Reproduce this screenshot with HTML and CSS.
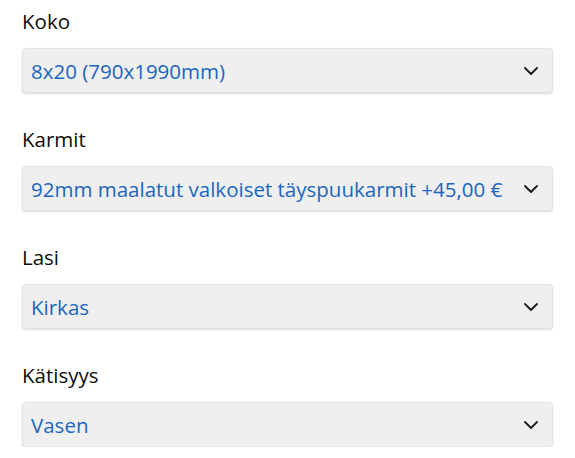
FILE: index.html
```html
<!DOCTYPE html>
<html lang="fi">
<head>
<meta charset="utf-8">
<link rel="stylesheet" href="styles.css">
</head>
<body>
<div class="form">
  <div class="field">
    <div class="label">Koko</div>
    <div class="select"><span class="value">8x20 (790x1990mm)</span><svg class="chev" viewBox="0 0 14 8" width="14" height="8"><path d="M1 1 L7 7 L13 1" fill="none" stroke="#1a1a1a" stroke-width="1.8" stroke-linecap="round" stroke-linejoin="round"/></svg></div>
  </div>
  <div class="field">
    <div class="label">Karmit</div>
    <div class="select"><span class="value">92mm maalatut valkoiset täyspuukarmit +45,00 €</span><svg class="chev" viewBox="0 0 14 8" width="14" height="8"><path d="M1 1 L7 7 L13 1" fill="none" stroke="#1a1a1a" stroke-width="1.8" stroke-linecap="round" stroke-linejoin="round"/></svg></div>
  </div>
  <div class="field">
    <div class="label">Lasi</div>
    <div class="select"><span class="value">Kirkas</span><svg class="chev" viewBox="0 0 14 8" width="14" height="8"><path d="M1 1 L7 7 L13 1" fill="none" stroke="#1a1a1a" stroke-width="1.8" stroke-linecap="round" stroke-linejoin="round"/></svg></div>
  </div>
  <div class="field">
    <div class="label">Kätisyys</div>
    <div class="select"><span class="value">Vasen</span><svg class="chev" viewBox="0 0 14 8" width="14" height="8"><path d="M1 1 L7 7 L13 1" fill="none" stroke="#1a1a1a" stroke-width="1.8" stroke-linecap="round" stroke-linejoin="round"/></svg></div>
  </div>
</div>
</body>
</html>
```
FILE: styles.css
```css
html, body {
  margin: 0;
  padding: 0;
  background: #ffffff;
}
body {
  font-family: "Open Sans", "DejaVu Sans", sans-serif;
}
.form {
  padding: 8px 22px 0 22px;
  display: flex;
  flex-direction: column;
  gap: 33px;
}
.field {
  display: flex;
  flex-direction: column;
  gap: 14px;
}
.label {
  font-size: 20.5px;
  line-height: 26px;
  color: #0d0d0d;
}
.select {
  height: 45px;
  box-sizing: border-box;
  background: #efefef;
  border: 1px solid #e4e4e4;
  border-radius: 4px;
  box-shadow: 0 1px 2px rgba(0, 0, 0, 0.15);
  display: flex;
  align-items: center;
  justify-content: space-between;
  padding: 0 14px 0 8px;
}
.value {
  font-size: 20.5px;
  color: #1a66c0;
  white-space: nowrap;
}
.chev {
  flex: none;
  display: block;
}
```
